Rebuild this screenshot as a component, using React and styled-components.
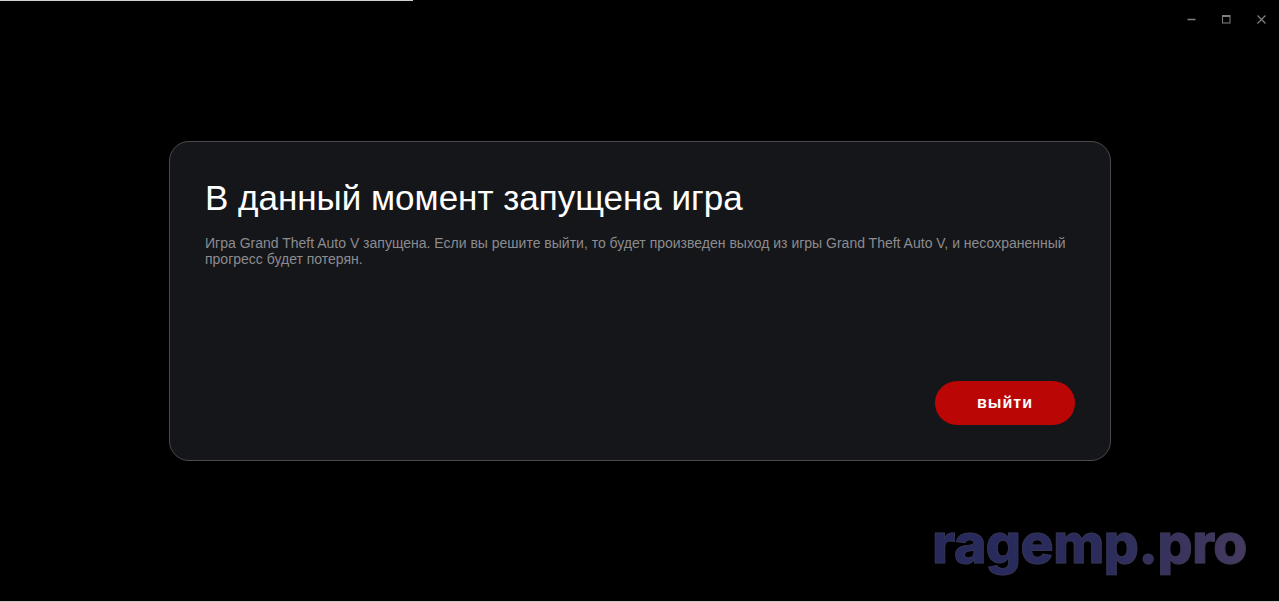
import React from 'react'
import styled, { createGlobalStyle } from 'styled-components'

const GlobalStyle = createGlobalStyle`
  html, body {
    margin: 0;
    padding: 0;
    background: #000;
    font-family: "Liberation Sans", Arial, sans-serif;
  }
`

const Page = styled.div`
  position: relative;
  box-sizing: border-box;
  width: 1279px;
  height: 602px;
  overflow: hidden;
  display: flex;
  align-items: center;
  justify-content: center;
  background: #000;
  border-bottom: 1px solid #c8c8c8;
`

const Progress = styled.div`
  position: absolute;
  top: 0;
  left: 0;
  height: 1px;
  background: #d0d0d0;
`

const WindowControls = styled.div`
  position: absolute;
  top: 10px;
  right: 0;
  display: flex;
`

const WindowButton = styled.button`
  width: 35px;
  height: 18px;
  padding: 0;
  border: 0;
  background: none;
  color: #808080;
  display: flex;
  align-items: center;
  justify-content: center;
  svg {
    display: block;
  }
`

const Card = styled.section`
  box-sizing: border-box;
  width: 942px;
  height: 320px;
  margin-left: 1px;
  padding: 36px 35px 35px;
  display: flex;
  flex-direction: column;
  background: #15161a;
  border: 1px solid #4a4a4c;
  border-radius: 20px;
`

const Title = styled.h1`
  margin: 0;
  font-size: 35px;
  line-height: 40px;
  font-weight: 400;
  color: #fff;
`

const Description = styled.p`
  margin: 17px 0 0;
  font-size: 14px;
  line-height: 16px;
  color: #8c8c8f;
`

const Actions = styled.div`
  margin-top: auto;
  display: flex;
  justify-content: flex-end;
`

const ExitButton = styled.button`
  width: 140px;
  height: 44px;
  padding: 0;
  border: 0;
  border-radius: 22px;
  background: #bb0606;
  color: #fff;
  font-family: "Liberation Sans", Arial, sans-serif;
  font-size: 16px;
  font-weight: 700;
  letter-spacing: 1px;
`

const Watermark = styled.div`
  position: absolute;
  right: 32px;
  bottom: 23px;
  font-family: Inter, Roboto, sans-serif;
  font-size: 55px;
  line-height: 70px;
  font-weight: 800;
  letter-spacing: -0.4px;
  -webkit-text-stroke: 1px rgba(60, 60, 75, 0.6);
  background: linear-gradient(90deg, #27295c 0%, #2b2c5c 55%, #463a60 100%);
  -webkit-background-clip: text;
  background-clip: text;
  color: transparent;
`

export default function App() {
  return (
    <>
      <GlobalStyle />
      <Page>
        <Progress style={{ width: '413px' }} />
        <WindowControls>
          <WindowButton aria-label="minimize">
            <svg width="9" height="9" viewBox="0 0 9 9">
              <path d="M0.5 4.5h8" stroke="currentColor" strokeWidth="1.5" />
            </svg>
          </WindowButton>
          <WindowButton aria-label="maximize">
            <svg width="9" height="9" viewBox="0 0 9 9" fill="none">
              <rect x="0.5" y="0.5" width="7.5" height="7.5" stroke="currentColor" />
              <path d="M0.5 1.5h7.5" stroke="currentColor" />
            </svg>
          </WindowButton>
          <WindowButton aria-label="close">
            <svg width="9" height="9" viewBox="0 0 9 9" fill="none">
              <path d="M0.5 0.5l8 8M8.5 0.5l-8 8" stroke="currentColor" strokeWidth="1.2" />
            </svg>
          </WindowButton>
        </WindowControls>
        <Card>
          <Title>В данный момент запущена игра</Title>
          <Description>
            Игра Grand Theft Auto V запущена. Если вы решите выйти, то будет произведен выход из игры Grand Theft Auto V, и несохраненный прогресс будет потерян.
          </Description>
          <Actions>
            <ExitButton>выйти</ExitButton>
          </Actions>
        </Card>
        <Watermark>ragemp.pro</Watermark>
      </Page>
    </>
  )
}
